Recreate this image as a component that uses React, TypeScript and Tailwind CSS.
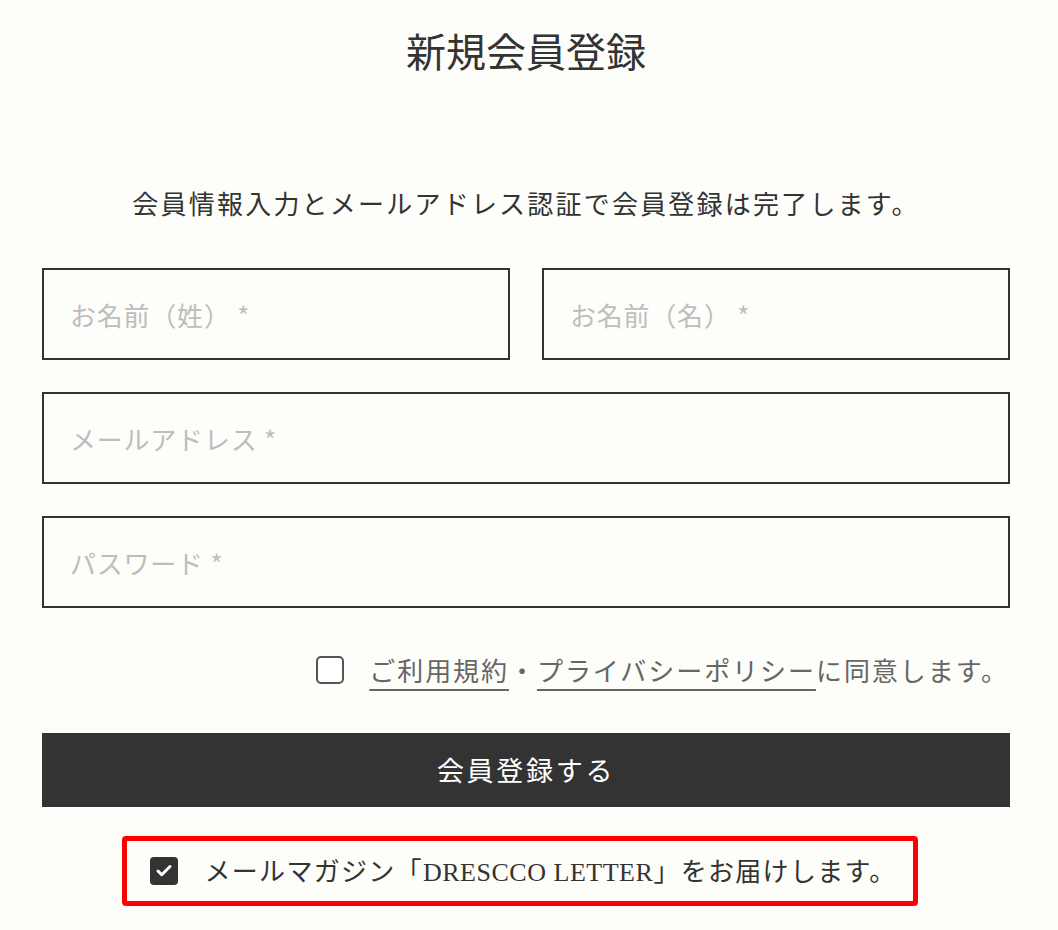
import { Check } from "lucide-react";

const jp = "font-['Noto_Sans_CJK_JP','Noto_Sans',sans-serif]";

function Field({ placeholder, className = "" }: { placeholder: string; className?: string }) {
  return (
    <div className={`h-[92px] border-2 border-[#333] flex items-center pl-[26px] ${className}`}>
      <span className="text-[26px] tracking-[0.03em] text-[#bdbdbd]">{placeholder}</span>
    </div>
  );
}

export default function App() {
  return (
    <div className={`min-h-[930px] bg-[#fdfdf9] text-[#333] ${jp}`}>
      <div className="ml-[42px] w-[968px] pt-[20px]">
        <h1 className="text-center text-[40px] leading-[60px]">新規会員登録</h1>

        <p className="mt-[103px] text-center text-[26px] leading-[40px] tracking-[0.085em]">
          会員情報入力とメールアドレス認証で会員登録は完了します。
        </p>

        <div className="mt-[45px] flex flex-col gap-[32px]">
          <div className="grid grid-cols-2 gap-[32px]">
            <Field placeholder="お名前（姓） *" />
            <Field placeholder="お名前（名） *" />
          </div>
          <Field placeholder="メールアドレス *" />
          <Field placeholder="パスワード *" className="h-[90px]" />
        </div>

        <div className="mt-[42px] flex items-center justify-end pr-[1px]">
          <span className="w-[28px] h-[28px] rounded-[5px] border-2 border-[#555] bg-white" />
          <p className="ml-[25px] text-[26px] leading-[40px] tracking-[0.075em] text-[#666]">
            <span className="underline decoration-[2px] underline-offset-[8px] decoration-[#666]">ご利用規約</span>
            ・
            <span className="underline decoration-[2px] underline-offset-[8px] decoration-[#666]">プライバシーポリシー</span>
            に同意します。
          </p>
        </div>

        <button className="mt-[43px] w-full h-[74px] bg-[#333] text-white text-[27px] tracking-[0.1em]">
          会員登録する
        </button>

        <div className="mt-[29px] flex justify-center pr-[12px]">
          <div className="h-[70px] border-[5px] border-[#ff0000] rounded-[4px] flex items-center pl-[23px] pr-[17px]">
            <span className="w-[28px] h-[28px] rounded-[4px] bg-[#333] flex items-center justify-center">
              <Check className="w-[18px] h-[18px] text-white" strokeWidth={4} />
            </span>
            <p className="ml-[27px] text-[26px] leading-[40px] tracking-[0.05em] text-[#333]">
              メールマガジン「
              <span className="font-['Liberation_Serif',serif] tracking-[0.02em]">DRESCCO LETTER</span>
              」をお届けします。
            </p>
          </div>
        </div>
      </div>
    </div>
  );
}
